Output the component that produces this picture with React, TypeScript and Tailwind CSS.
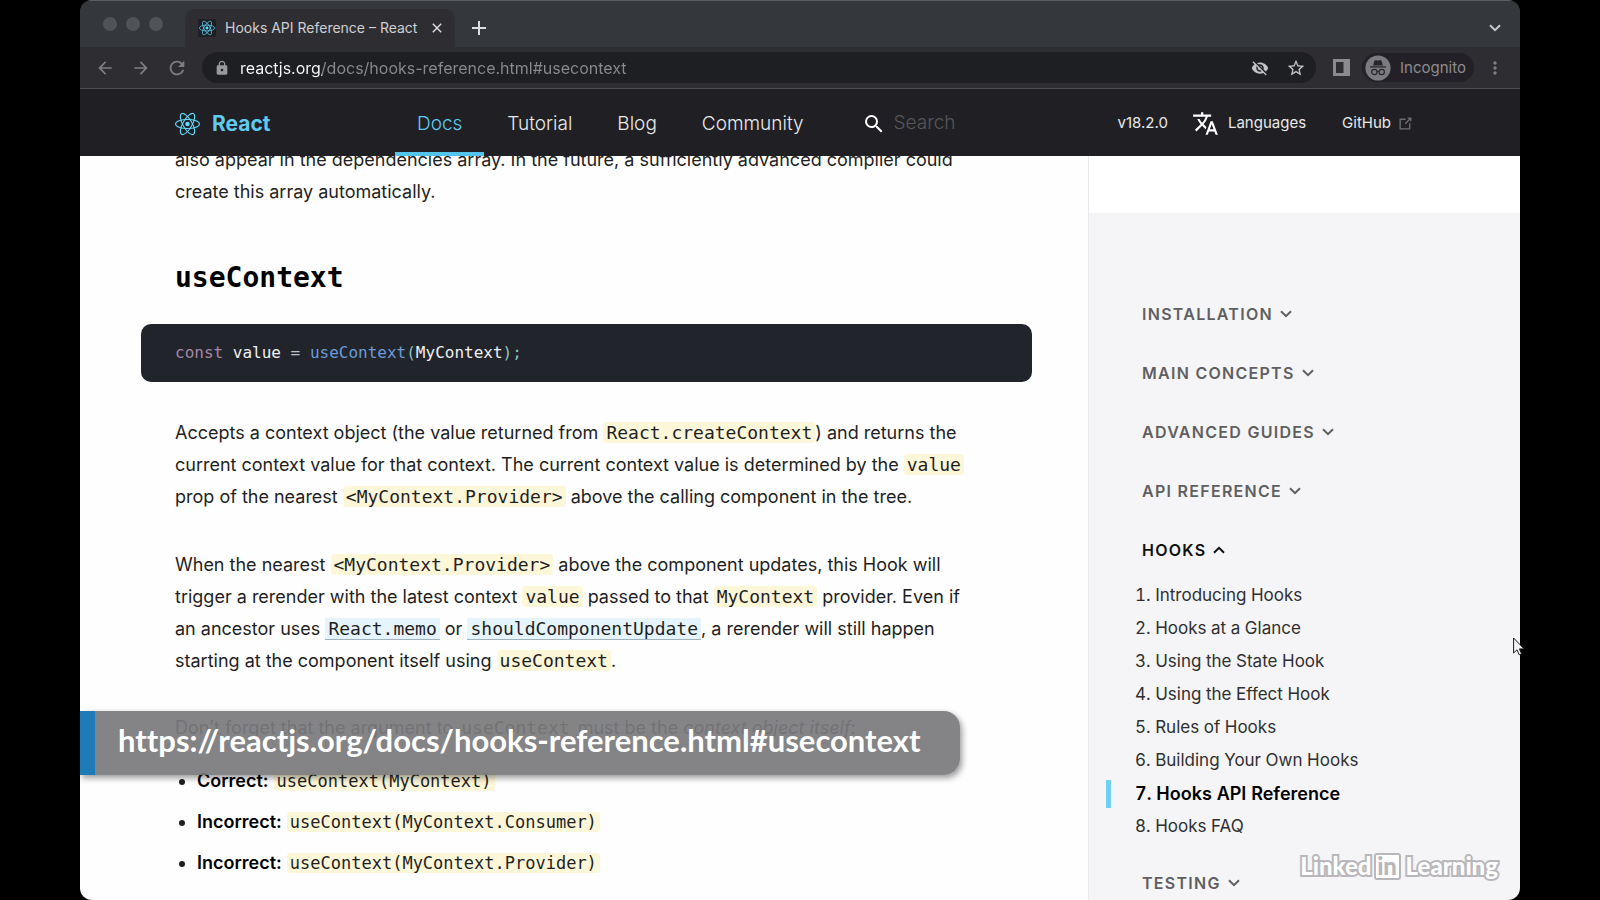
import type { ReactNode } from "react";
import {
  MdAdd,
  MdArrowBack,
  MdArrowForward,
  MdClose,
  MdLock,
  MdMoreVert,
  MdRefresh,
  MdSearch,
  MdStarBorder,
  MdTranslate,
  MdVisibilityOff,
} from "react-icons/md";

function ReactLogo({ className }: { className: string }) {
  return (
    <svg viewBox="-11.5 -10.3 23 20.6" className={className} aria-hidden="true">
      <circle r="2.05" fill="#61dafb" />
      <g fill="none" stroke="#61dafb" strokeWidth="1">
        <ellipse rx="11" ry="4.2" />
        <ellipse rx="11" ry="4.2" transform="rotate(60)" />
        <ellipse rx="11" ry="4.2" transform="rotate(120)" />
      </g>
    </svg>
  );
}

function Chevron({ up = false, className }: { up?: boolean; className: string }) {
  return (
    <svg viewBox="0 0 12 8" className={className} fill="none" stroke="currentColor" strokeWidth="2" aria-hidden="true">
      <path d={up ? "M1 6.8 6 1.8l5 5" : "M1 1.2l5 5 5-5"} />
    </svg>
  );
}

function ExternalIcon() {
  return (
    <svg viewBox="12 12 76 76" className="size-[13px] text-[#6d6d6d]" fill="currentColor" aria-hidden="true">
      <path d="M18.8,85.1h56l0,0c2.2,0,4-1.8,4-4v-32h-8v28h-48v-48h28v-8h-32l0,0c-2.2,0-4,1.8-4,4v56C14.8,83.3,16.6,85.1,18.8,85.1z" />
      <polygon points="45.7,48.7 51.3,54.3 77.2,28.5 77.2,37.2 85.2,37.2 85.2,14.9 62.8,14.9 62.8,22.9 71.5,22.9" />
    </svg>
  );
}

function IncognitoIcon() {
  return (
    <svg viewBox="0 0 26 26" className="size-[26px]" aria-hidden="true">
      <circle cx="13" cy="13" r="12.6" fill="#7c7c80" />
      <path d="M9.600 5.400 11 5l2 .700 2-.700 1.400.400 1.600 5H8z" fill="#27262b" />
      <path d="M5 11.200h16v1.300H5z" fill="#27262b" />
      <g fill="none" stroke="#27262b" strokeWidth="1.200">
        <circle cx="9.300" cy="17" r="2.700" />
        <circle cx="16.700" cy="17" r="2.700" />
        <path d="M12 16.600q1-.7 2 0" />
      </g>
    </svg>
  );
}

function BrowserChrome() {
  return (
    <div className="shrink-0 border-b border-[#4b4b50] bg-[#2e2d32]">
      <div className="flex h-[47px] items-end border-t border-[#5a5d61] bg-[#34373b]">
        <div className="flex w-[105px] items-center gap-[9px] self-center pl-[23px]">
          <span className="size-[14px] rounded-full bg-[#525357]" />
          <span className="size-[14px] rounded-full bg-[#525357]" />
          <span className="size-[14px] rounded-full bg-[#525357]" />
        </div>
        <div className="flex h-[38px] w-[270px] items-center rounded-t-[10px] bg-[#2e2d32] pr-[10px] pl-[13px]">
          <span className="flex size-[18px] items-center justify-center bg-[#1d1f24]">
            <ReactLogo className="size-4" />
          </span>
          <span className="ml-[9px] grow text-sm whitespace-nowrap text-[#cfcfd2]">Hooks API Reference – React</span>
          <button type="button" aria-label="Close tab">
            <MdClose className="size-4 text-[#e2e2e4]" />
          </button>
        </div>
        <button type="button" aria-label="New tab" className="ml-3 self-center pt-2">
          <MdAdd className="size-6 text-[#dedee0]" />
        </button>
        <button type="button" aria-label="Search tabs" className="mr-[19px] ml-auto self-center pt-2">
          <Chevron className="h-2 w-3 text-[#c9c9cc]" />
        </button>
      </div>
      <div className="flex h-[41px] items-center px-[15px] text-[#7e7e82]">
        <button type="button" aria-label="Back">
          <MdArrowBack className="size-5" />
        </button>
        <button type="button" aria-label="Forward" className="ml-4">
          <MdArrowForward className="size-5" />
        </button>
        <button type="button" aria-label="Reload" className="ml-[15px]">
          <MdRefresh className="size-[22px]" />
        </button>
        <div className="ml-[14px] flex h-[31px] grow items-center rounded-full bg-[#1e1f23] pr-[10px] pl-3">
          <MdLock className="size-4 text-[#9a9a9e]" />
          <input
            aria-label="Address"
            defaultValue="reactjs.org/docs/hooks-reference.html#usecontext"
            className="ml-[10px] min-w-0 grow bg-linear-to-r from-white from-[82px] to-[#8a8a8d] to-[82px] bg-clip-text text-base text-transparent outline-none"
          />
          <button type="button" aria-label="Third-party cookies blocked">
            <MdVisibilityOff className="size-[18px] text-[#c4c4c6]" />
          </button>
          <button type="button" aria-label="Bookmark this tab" className="ml-[17px]">
            <MdStarBorder className="size-5 text-[#c4c4c6]" />
          </button>
        </div>
        <button type="button" aria-label="Side panel" className="ml-[17px]">
          <svg viewBox="0 0 17 17" className="size-[17px]" aria-hidden="true">
            <path d="M0 0h17v17H0zM3 3v11h7.500V3z" fill="#8b8b8e" fillRule="evenodd" />
          </svg>
        </button>
        <button
          type="button"
          className="ml-3 flex h-[29px] items-center gap-[9px] rounded-full bg-[#232127] pr-2 pl-[3px] text-[15px] leading-[28px] text-[#8d8d90]"
        >
          <IncognitoIcon />
          <span className="pt-px">Incognito</span>
        </button>
        <button type="button" aria-label="Menu" className="ml-[11px]">
          <MdMoreVert className="size-5" />
        </button>
      </div>
    </div>
  );
}

const navLinks = ["Tutorial", "Blog", "Community"];

function SiteHeader() {
  return (
    <header className="flex h-[67px] shrink-0 items-center bg-[#202024] pt-[2px] pr-[108px] pl-[95px] text-[#e9e9ea]">
      <a href="#home" className="flex w-[220px] shrink-0 items-center gap-3 text-[21px] font-bold text-[#5fcbf0]">
        <ReactLogo className="h-6 w-[25px]" />
        React
      </a>
      <nav className="flex h-full shrink-0 items-stretch gap-px text-[19px] font-light">
        <a href="#docs" className="flex items-center border-b-4 border-[#55c4ec] px-[22px] pt-[5px] text-[#5fcbf0]">
          Docs
        </a>
        {navLinks.map((label) => (
          <a key={label} href={`#${label.toLowerCase()}`} className="flex items-center px-[22px] pt-px">
            {label}
          </a>
        ))}
      </nav>
      <label className="ml-9 flex min-w-0 grow items-center gap-2 text-[19px] font-light">
        <MdSearch className="size-6 shrink-0 text-white" />
        <input
          type="search"
          aria-label="Search"
          placeholder="Search"
          className="w-full min-w-0 bg-transparent outline-none placeholder:text-[#55555a]"
        />
      </label>
      <div className="flex shrink-0 items-center text-[15px]">
        <a href="#versions">v18.2.0</a>
        <a href="#languages" className="ml-6 flex items-center gap-[9px]">
          <MdTranslate className="size-[27px] text-white" />
          Languages
        </a>
        <a href="#github" className="ml-9 flex items-center gap-2">
          GitHub
          <ExternalIcon />
        </a>
      </div>
    </header>
  );
}

function Code({ children }: { children: ReactNode }) {
  return (
    <code className="rounded-[3px] bg-[#fdf7d9] px-[3px] font-['DejaVu_Sans_Mono',monospace] text-[#1f1f1f]">
      {children}
    </code>
  );
}

function CodeLink({ children }: { children: string }) {
  return (
    <a href={`#${children}`} className="border-b border-[#9fb4c0] bg-[#e6f5fd] px-[3px]">
      <code className="font-['DejaVu_Sans_Mono',monospace] text-[#1f1f1f]">{children}</code>
    </a>
  );
}

const examples = [
  { verdict: "Correct:", code: "useContext(MyContext)" },
  { verdict: "Incorrect:", code: "useContext(MyContext.Consumer)" },
  { verdict: "Incorrect:", code: "useContext(MyContext.Provider)" },
];

function Article() {
  return (
    <main className="min-w-0 grow overflow-hidden bg-[#fefefe] pr-14 pl-[61px] text-lg leading-8 whitespace-nowrap text-[#1f1f1f]">
      <div className="-mt-3 px-[34px]">
        <p>
          also appear in the dependencies array. In the future, a sufficiently advanced compiler could
          <br />
          create this array automatically.
        </p>
        <h2 className="mt-[52px] font-['DejaVu_Sans_Mono',monospace] text-[28px] leading-9 font-bold text-black">
          useContext
        </h2>
      </div>
      <pre className="mt-7 rounded-[10px] bg-[#22242c] px-[34px] pt-[13px] pb-3 text-base leading-8 text-[#f0f0f0]">
        <code className="font-['DejaVu_Sans_Mono',monospace]">
          <span className="text-[#a586a8]">const</span> value <span className="text-[#b9c4c4]">=</span>{" "}
          <span className="text-[#6b9bd8]">useContext</span>
          <span className="text-[#88c6be]">(</span>MyContext<span className="text-[#88c6be]">);</span>
        </code>
      </pre>
      <div className="px-[34px]">
        <p className="mt-[35px]">
          Accepts a context object (the value returned from <Code>React.createContext</Code>) and returns the
          <br />
          current context value for that context. The current context value is determined by the <Code>value</Code>
          <br />
          prop of the nearest <Code>&lt;MyContext.Provider&gt;</Code> above the calling component in the tree.
        </p>
        <p className="mt-9">
          When the nearest <Code>&lt;MyContext.Provider&gt;</Code> above the component updates, this Hook will
          <br />
          trigger a rerender with the latest context <Code>value</Code> passed to that <Code>MyContext</Code> provider.
          Even if
          <br />
          an ancestor uses <CodeLink>React.memo</CodeLink> or <CodeLink>shouldComponentUpdate</CodeLink>, a rerender
          will still happen
          <br />
          starting at the component itself using <Code>useContext</Code>.
        </p>
        <p className="mt-[35px]">
          Don’t forget that the argument to <Code>useContext</Code> must be the <em>context object itself</em>:
        </p>
        <ul className="mt-[21px] flex list-disc flex-col gap-[9px] pl-[22px]">
          {examples.map(({ verdict, code }) => (
            <li key={code}>
              <b className="font-semibold text-black">{verdict}</b>{" "}
              <span className="text-[17px]">
                <Code>{code}</Code>
              </span>
            </li>
          ))}
        </ul>
      </div>
    </main>
  );
}

const hooks = [
  "Introducing Hooks",
  "Hooks at a Glance",
  "Using the State Hook",
  "Using the Effect Hook",
  "Rules of Hooks",
  "Building Your Own Hooks",
  "Hooks API Reference",
  "Hooks FAQ",
];

function Section({ title, open = false }: { title: string; open?: boolean }) {
  const color = open ? "text-[#101010]" : "text-[#5f5f61]";
  return (
    <button
      type="button"
      aria-expanded={open}
      className={`flex items-center gap-[7px] pl-[53px] text-base leading-6 font-semibold tracking-[0.08em] uppercase ${color}`}
    >
      {title}
      <Chevron up={open} className="h-2 w-3" />
    </button>
  );
}

function Sidebar() {
  return (
    <aside className="w-[432px] shrink-0 overflow-hidden border-l border-[#e9e9eb] bg-[#f5f5f7]">
      <div className="h-[57px] bg-white" />
      <div className="mt-[89px] flex flex-col items-start gap-[35px]">
        <Section title="Installation" />
        <Section title="Main Concepts" />
        <Section title="Advanced Guides" />
        <Section title="API Reference" />
        <Section title="Hooks" open />
      </div>
      <ol className="mt-[17px] mb-[28px] text-[17px] leading-[33px] text-[#2f2f31] tabular-nums">
        {hooks.map((title, i) => {
          const current = title === "Hooks API Reference";
          return (
            <li key={title} className="flex items-center pl-[17px]">
              <span className={current ? "h-7 w-[5px] bg-[#6fd0f3]" : "h-7 w-[5px]"} />
              <a
                href={`#hook-${i + 1}`}
                className={current ? "ml-6 text-lg leading-[33px] font-semibold text-black" : "ml-6"}
              >
                {i + 1}. {title}
              </a>
            </li>
          );
        })}
      </ol>
      <Section title="Testing" />
    </aside>
  );
}

function Watermark() {
  const outlined = "text-white [-webkit-text-stroke:4px_#b9b7bc] [paint-order:stroke_fill]";
  return (
    <div className="absolute right-[22px] bottom-[19px] flex items-center font-['Lato',sans-serif] text-2xl leading-[30px] font-black">
      <span className={outlined}>Linked</span>
      <span className="mr-[5px] ml-[2px] flex size-[27px] items-center justify-center rounded-[3px] border-2 border-[#b9b7bc] bg-white leading-none text-[#b9b7bc]">
        in
      </span>
      <span className={outlined}>Learning</span>
    </div>
  );
}

export default function App() {
  return (
    <div className="h-screen overflow-hidden bg-black px-20 font-['Inter',sans-serif]">
      <div className="relative flex h-full flex-col">
        <div className="flex min-h-0 grow flex-col overflow-hidden rounded-[12px]">
          <BrowserChrome />
          <SiteHeader />
          <div className="flex min-h-0 grow">
            <Article />
            <Sidebar />
          </div>
        </div>
        <div className="absolute bottom-[125px] left-0 flex h-[64px] items-center rounded-r-[16px] border-l-[15px] border-[#1f7ab8] bg-[#7a7a7d]/92 pr-[39px] pb-[6px] pl-[23px] font-['Lato',sans-serif] text-[31px] font-bold whitespace-nowrap text-white shadow-[2px_3px_6px_rgba(0,0,0,0.4)] [font-variant-ligatures:none]">
          https://reactjs.org/docs/hooks-reference.html#usecontext
        </div>
        <Watermark />
        <svg
          viewBox="0 0 12 19"
          className="absolute top-[637px] right-[-5px] h-[19px] w-3"
          fill="#f4f4f4"
          stroke="#1a1a1a"
          strokeWidth="1"
          aria-hidden="true"
        >
          <path d="M.6 1v15l3.400-3.200 2.200 5 2.400-1-2.200-4.900h4.700z" />
        </svg>
      </div>
    </div>
  );
}
